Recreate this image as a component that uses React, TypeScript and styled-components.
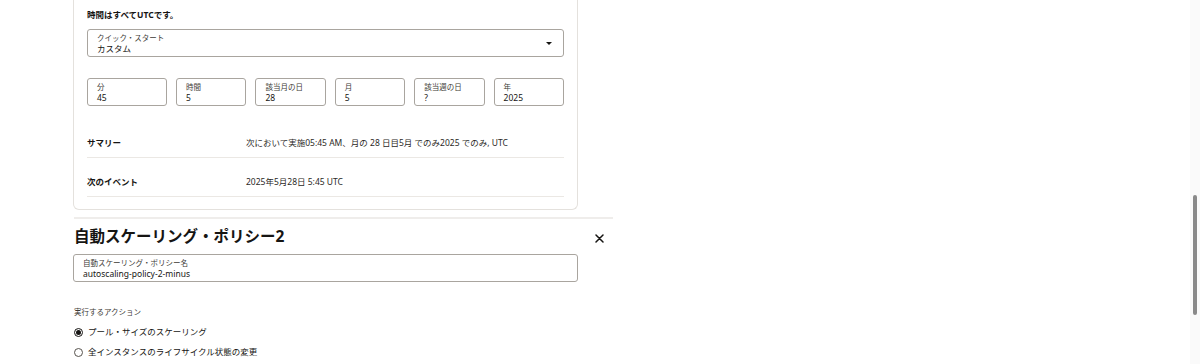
import styled, { createGlobalStyle } from "styled-components";

const GlobalStyle = createGlobalStyle`
  html, body {
    margin: 0;
    padding: 0;
    background: #ffffff;
    overflow: hidden;
  }
  body {
    font-family: "Noto Sans", "Noto Sans CJK JP", sans-serif;
    color: #161513;
  }
`;

const Page = styled.div`
  width: 539px;
  margin-left: 74px;
  display: flex;
  flex-direction: column;
`;

const Card = styled.div`
  width: 505px;
  box-sizing: border-box;
  margin-left: -1px;
  border: 1px solid #e4e1dd;
  border-top: none;
  border-radius: 0 0 6px 6px;
  padding: 9px 13px 12px 13px;
`;

const Note = styled.div`
  font-size: 8.5px;
  font-weight: 700;
  line-height: 12px;
`;

const Field = styled.div`
  position: relative;
  box-sizing: border-box;
  height: 28px;
  border: 1px solid #a9a59f;
  border-radius: 3px;
  padding: 3px 9px;
  display: flex;
  flex-direction: column;
  justify-content: center;
  background: #fff;
`;

const FieldLabel = styled.span`
  font-size: 7.5px;
  line-height: 10px;
  color: #3d3a36;
  white-space: nowrap;
`;

const FieldValue = styled.span`
  font-size: 8.5px;
  line-height: 11px;
  color: #161513;
  white-space: nowrap;
`;

const Select = styled(Field)`
  margin-top: 8px;
`;

const Caret = styled.span`
  position: absolute;
  right: 11px;
  top: 12px;
  width: 0;
  height: 0;
  border-left: 3px solid transparent;
  border-right: 3px solid transparent;
  border-top: 3.5px solid #161513;
`;

const FieldGrid = styled.div`
  margin-top: 21px;
  display: grid;
  grid-template-columns: 80px repeat(5, 1fr);
  column-gap: 9px;
`;

const SummaryList = styled.div`
  margin-top: 13px;
  display: flex;
  flex-direction: column;
`;

const SummaryRow = styled.div`
  display: grid;
  grid-template-columns: 159px 1fr;
  padding: 18px 0 8px 0;
  border-bottom: 1px solid #ebe8e4;
  font-size: 8.5px;
  line-height: 12px;
`;

const SummaryKey = styled.span`
  font-weight: 700;
`;

const SummaryValue = styled.span`
  color: #2b2926;
`;

const Divider = styled.div`
  margin-top: 7px;
  height: 2px;
  background: #efedeb;
`;

const HeadingRow = styled.div`
  margin-top: 6px;
  display: flex;
  align-items: center;
  justify-content: space-between;
  padding-right: 9px;
`;

const Heading = styled.h2`
  margin: 0;
  font-size: 15.5px;
  line-height: 22px;
  font-weight: 700;
`;

const CloseButton = styled.button`
  border: none;
  background: none;
  padding: 0;
  margin-top: 5px;
  width: 10px;
  height: 10px;
  display: flex;
  align-items: center;
  justify-content: center;
  cursor: pointer;
`;

const NameField = styled(Field)`
  width: 505px;
  margin-left: -1px;
  margin-top: 7px;
`;

const ActionLabel = styled.div`
  margin-top: 25px;
  font-size: 7.5px;
  line-height: 11px;
  color: #3d3a36;
`;

const RadioGroup = styled.div`
  margin-top: 8px;
  display: flex;
  flex-direction: column;
  gap: 8px;
`;

const RadioRow = styled.label`
  display: flex;
  align-items: center;
  gap: 5px;
  font-size: 8.5px;
  line-height: 12px;
`;

const RadioDot = styled.span<{ $checked?: boolean }>`
  box-sizing: border-box;
  width: 9px;
  height: 9px;
  border-radius: 50%;
  border: 1px solid ${(p) => (p.$checked ? "#161513" : "#57534e")};
  display: flex;
  align-items: center;
  justify-content: center;
  &::after {
    content: "";
    width: 5px;
    height: 5px;
    border-radius: 50%;
    background: ${(p) => (p.$checked ? "#161513" : "transparent")};
  }
`;

const ScrollTrack = styled.div`
  position: fixed;
  top: 0;
  right: 0;
  width: 10px;
  height: 100%;
  background: #fafafa;
`;

const ScrollThumb = styled.div`
  position: absolute;
  left: 3px;
  top: 195px;
  width: 4px;
  height: 120px;
  border-radius: 2px;
  background: #8a8a8a;
`;

const cronFields = [
  { label: "分", value: "45" },
  { label: "時間", value: "5" },
  { label: "該当月の日", value: "28" },
  { label: "月", value: "5" },
  { label: "該当週の日", value: "?" },
  { label: "年", value: "2025" },
];

const summary = [
  {
    key: "サマリー",
    value: "次において実施05:45 AM、月の 28 日目5月 でのみ2025 でのみ, UTC",
  },
  { key: "次のイベント", value: "2025年5月28日 5:45 UTC" },
];

export default function App() {
  return (
    <>
      <GlobalStyle />
      <Page>
        <Card>
          <Note>時間はすべてUTCです。</Note>
          <Select>
            <FieldLabel>クイック・スタート</FieldLabel>
            <FieldValue>カスタム</FieldValue>
            <Caret />
          </Select>
          <FieldGrid>
            {cronFields.map((f) => (
              <Field key={f.label}>
                <FieldLabel>{f.label}</FieldLabel>
                <FieldValue>{f.value}</FieldValue>
              </Field>
            ))}
          </FieldGrid>
          <SummaryList>
            {summary.map((s) => (
              <SummaryRow key={s.key}>
                <SummaryKey>{s.key}</SummaryKey>
                <SummaryValue>{s.value}</SummaryValue>
              </SummaryRow>
            ))}
          </SummaryList>
        </Card>
        <Divider />
        <HeadingRow>
          <Heading>自動スケーリング・ポリシー2</Heading>
          <CloseButton aria-label="close">
            <svg width="9" height="9" viewBox="0 0 9 9">
              <path
                d="M1 1L8 8M8 1L1 8"
                stroke="#161513"
                strokeWidth="1.5"
                strokeLinecap="round"
              />
            </svg>
          </CloseButton>
        </HeadingRow>
        <NameField>
          <FieldLabel>自動スケーリング・ポリシー名</FieldLabel>
          <FieldValue>autoscaling-policy-2-minus</FieldValue>
        </NameField>
        <ActionLabel>実行するアクション</ActionLabel>
        <RadioGroup>
          <RadioRow>
            <RadioDot $checked />
            プール・サイズのスケーリング
          </RadioRow>
          <RadioRow>
            <RadioDot />
            全インスタンスのライフサイクル状態の変更
          </RadioRow>
        </RadioGroup>
      </Page>
      <ScrollTrack>
        <ScrollThumb />
      </ScrollTrack>
    </>
  );
}
